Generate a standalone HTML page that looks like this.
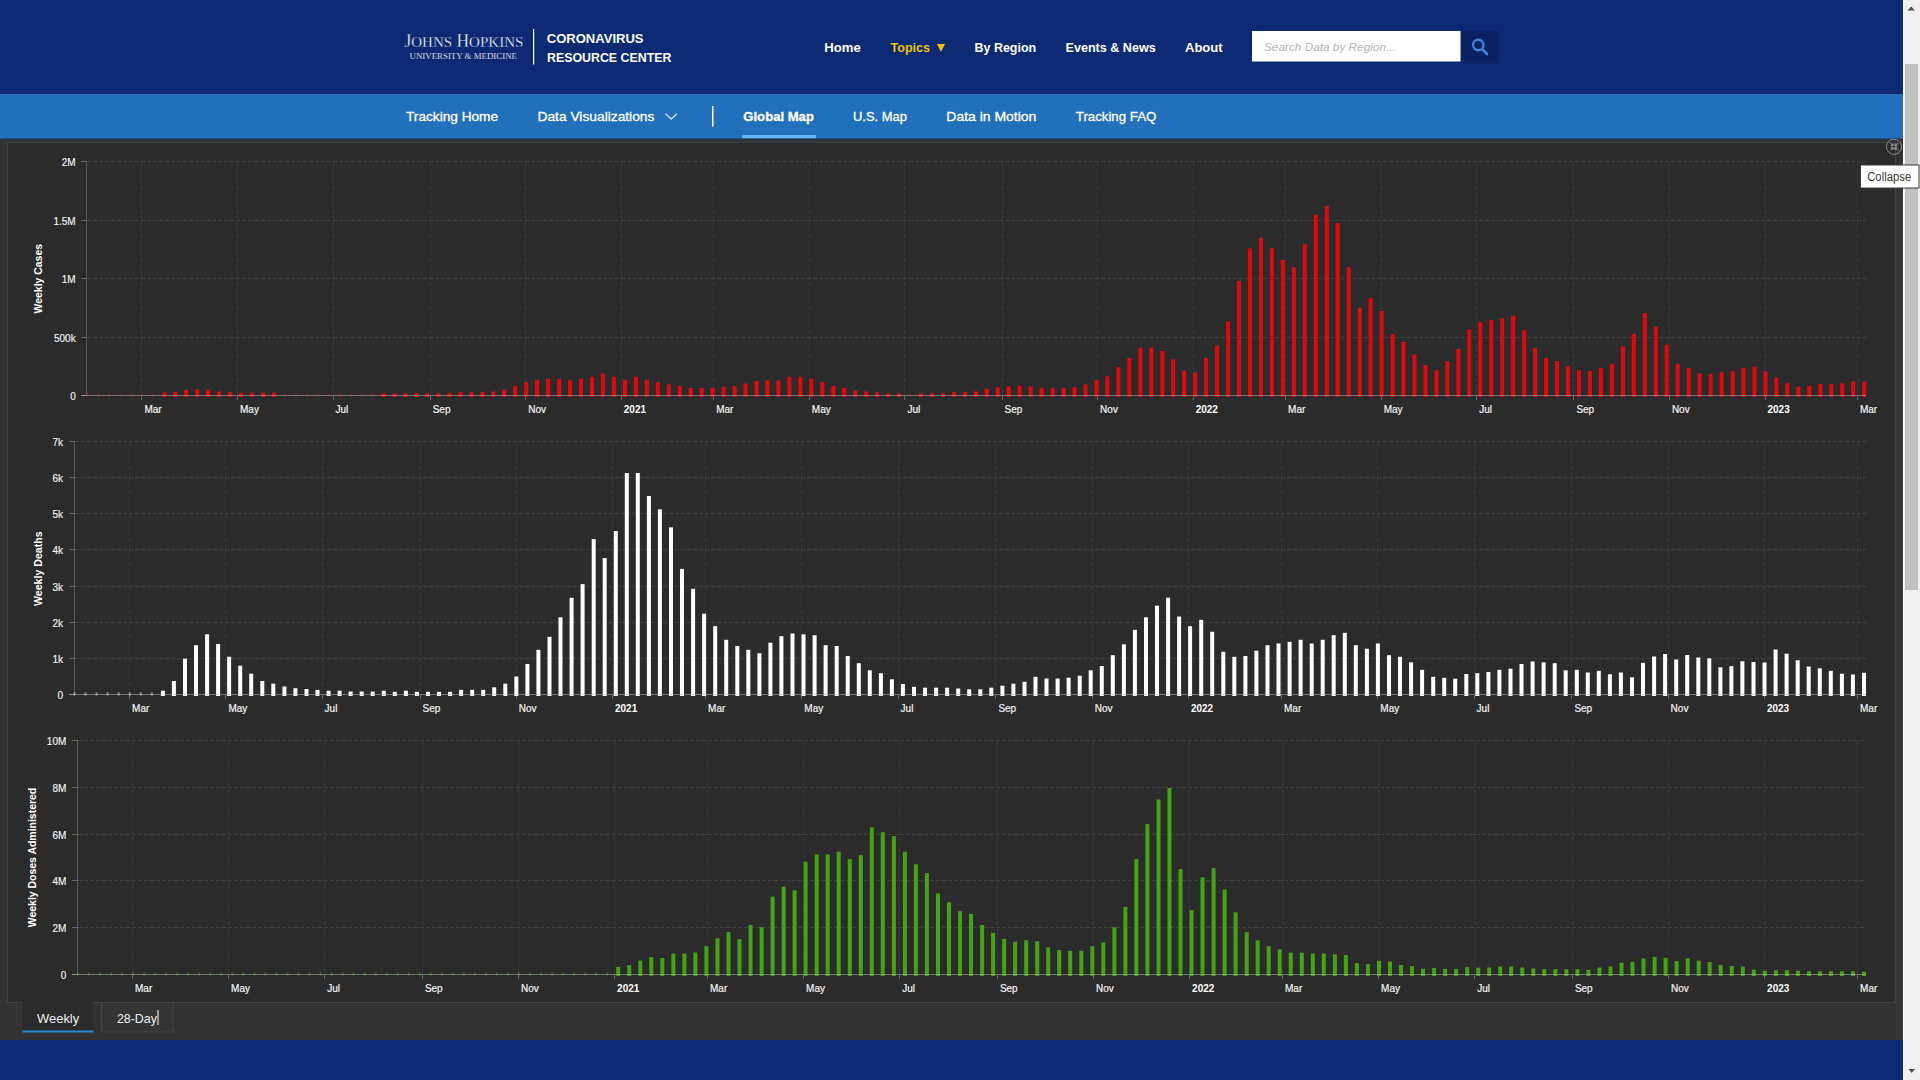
<!DOCTYPE html>
<html><head><meta charset="utf-8">
<style>
html,body{margin:0;padding:0;width:1920px;height:1080px;overflow:hidden;background:#333;font-family:"Liberation Sans",sans-serif;}
.abs{position:absolute;}
#hdr{left:0;top:0;width:1903px;height:94px;background:#0c2a74;}
#sub{left:0;top:94px;width:1903px;height:45px;background:#2270bb;border-top:1px solid #2d6db5;box-sizing:border-box;}
#content{left:0;top:139px;width:1903px;height:901px;background:#333;}
#panel{left:7px;top:142px;width:1889px;height:861px;background:#2b2b2b;border:1px solid #404040;box-sizing:border-box;}
#foot{left:0;top:1040px;width:1903px;height:40px;background:#0c2a74;}
#scroll{left:1903px;top:0;width:17px;height:1080px;background:#f0f0f0;border-left:1px solid #fff;box-sizing:border-box;}
#thumb{left:1905px;top:64px;width:13px;height:526px;background:#c1c1c1;}
svg text{font-family:"Liberation Sans",sans-serif;}
.g{stroke:#404040;stroke-width:1;stroke-dasharray:4 2;shape-rendering:crispEdges;}
.gv{stroke:#393939;stroke-width:1;stroke-dasharray:4 2;shape-rendering:crispEdges;}
.ax{stroke:#575757;stroke-width:1;shape-rendering:crispEdges;}
.tk{stroke:#666;stroke-width:1;shape-rendering:crispEdges;}
.yl{font-size:10px;fill:#f2f2f2;text-anchor:end;stroke:#f2f2f2;stroke-width:0.15px;}
.xl{font-size:10px;fill:#f2f2f2;stroke:#f2f2f2;stroke-width:0.2px;}
.xly{font-size:10px;fill:#fff;font-weight:bold;}
.tl{font-size:10px;fill:#fff;font-weight:bold;}
.nav{font-size:13px;fill:#fff;font-weight:bold;}
.snav{font-size:13.5px;fill:#fff;stroke:#fff;stroke-width:0.3px;}
</style></head><body>
<div id="hdr" class="abs"></div>
<div id="sub" class="abs"></div>
<div id="content" class="abs"></div>
<div id="panel" class="abs"></div>
<div id="foot" class="abs"></div>
<div id="scroll" class="abs"></div>
<div id="thumb" class="abs"></div>
<svg class="abs" style="left:0;top:0" width="1920" height="1080" viewBox="0 0 1920 1080">
<!-- header -->
<g fill="#fff">
<text x="404.4" y="46.6" style="font-family:'Liberation Serif';paint-order:fill" stroke="#0c2a74" stroke-width="0.35" font-size="18" textLength="119" lengthAdjust="spacingAndGlyphs">J<tspan font-size="15.5">OHNS</tspan> H<tspan font-size="15.5">OPKINS</tspan></text>
<text x="409.5" y="59" style="font-family:'Liberation Serif'" stroke="#0c2a74" stroke-width="0.15" font-size="7.6" textLength="107.5" lengthAdjust="spacingAndGlyphs">UNIVERSITY &amp; MEDICINE</text>
<rect x="533" y="29" width="1.2" height="35.5"/>
<text x="546.8" y="43.4" font-size="12.6" font-weight="bold" textLength="96.7" lengthAdjust="spacingAndGlyphs">CORONAVIRUS</text>
<text x="547" y="61.5" font-size="12.6" font-weight="bold" textLength="124.4" lengthAdjust="spacingAndGlyphs">RESOURCE CENTER</text>
</g>
<g class="nav">
<text x="824.2" y="51.9" class="nav" textLength="36.6" lengthAdjust="spacingAndGlyphs">Home</text>
<text x="890.5" y="51.9" class="nav" style="fill:#f3c300" textLength="39.5" lengthAdjust="spacingAndGlyphs">Topics</text>
<path d="M937 44 L945 44 L941 52 Z" fill="#f3c300"/>
<text x="974.5" y="51.9" class="nav" textLength="61.7" lengthAdjust="spacingAndGlyphs">By Region</text>
<text x="1065.5" y="51.9" class="nav" textLength="90.2" lengthAdjust="spacingAndGlyphs">Events &amp; News</text>
<text x="1185" y="51.9" class="nav" textLength="37.5" lengthAdjust="spacingAndGlyphs">About</text>
</g>
<rect x="1252" y="31" width="208.5" height="30.5" fill="#fff"/>
<rect x="1461.5" y="31" width="37" height="32.5" fill="#0a2262"/>
<text x="1264" y="50.8" font-size="11.5" font-style="italic" fill="#b5b5b5" textLength="131.8" lengthAdjust="spacingAndGlyphs">Search Data by Region...</text>
<g stroke="#3d85d6" stroke-width="2.4" fill="none"><circle cx="1478.3" cy="45" r="5.2"/><line x1="1482" y1="49" x2="1487" y2="54" stroke-width="2.6" stroke-linecap="round"/></g>
<!-- subnav -->
<g>
<text x="406" y="121.4" class="snav" textLength="92.1" lengthAdjust="spacingAndGlyphs">Tracking Home</text>
<text x="537.5" y="121.4" class="snav" textLength="116.9" lengthAdjust="spacingAndGlyphs">Data Visualizations</text>
<path d="M665.5 113.8 L671.2 119 L677 113.8" stroke="#cfe0f3" stroke-width="1.3" fill="none"/>
<rect x="712" y="106" width="1.5" height="20.6" fill="#fff"/>
<text x="743.3" y="121.4" class="snav" font-weight="bold" textLength="70.6" lengthAdjust="spacingAndGlyphs">Global Map</text>
<rect x="742.2" y="135" width="73.8" height="3.5" fill="#6cb2f0"/>
<text x="853" y="121.4" class="snav" textLength="54" lengthAdjust="spacingAndGlyphs">U.S. Map</text>
<text x="946.3" y="121.4" class="snav" textLength="90" lengthAdjust="spacingAndGlyphs">Data in Motion</text>
<text x="1075.8" y="121.4" class="snav" textLength="80.5" lengthAdjust="spacingAndGlyphs">Tracking FAQ</text>
</g>
<rect x="0" y="138.5" width="1903" height="1.5" fill="#1d3550"/>
<rect x="0" y="93" width="1903" height="1" fill="#03276d"/>
<!-- charts -->
<line x1="86.5" y1="337.0" x2="1866" y2="337.0" class="g"/>
<line x1="86.5" y1="278.5" x2="1866" y2="278.5" class="g"/>
<line x1="86.5" y1="220.0" x2="1866" y2="220.0" class="g"/>
<line x1="86.5" y1="161.5" x2="1866" y2="161.5" class="g"/>
<line x1="141.9" y1="161.5" x2="141.9" y2="395.5" class="gv"/>
<line x1="237.5" y1="161.5" x2="237.5" y2="395.5" class="gv"/>
<line x1="333.0" y1="161.5" x2="333.0" y2="395.5" class="gv"/>
<line x1="430.2" y1="161.5" x2="430.2" y2="395.5" class="gv"/>
<line x1="525.7" y1="161.5" x2="525.7" y2="395.5" class="gv"/>
<line x1="621.3" y1="161.5" x2="621.3" y2="395.5" class="gv"/>
<line x1="713.7" y1="161.5" x2="713.7" y2="395.5" class="gv"/>
<line x1="809.3" y1="161.5" x2="809.3" y2="395.5" class="gv"/>
<line x1="904.9" y1="161.5" x2="904.9" y2="395.5" class="gv"/>
<line x1="1002.0" y1="161.5" x2="1002.0" y2="395.5" class="gv"/>
<line x1="1097.6" y1="161.5" x2="1097.6" y2="395.5" class="gv"/>
<line x1="1193.2" y1="161.5" x2="1193.2" y2="395.5" class="gv"/>
<line x1="1285.6" y1="161.5" x2="1285.6" y2="395.5" class="gv"/>
<line x1="1381.2" y1="161.5" x2="1381.2" y2="395.5" class="gv"/>
<line x1="1476.7" y1="161.5" x2="1476.7" y2="395.5" class="gv"/>
<line x1="1573.9" y1="161.5" x2="1573.9" y2="395.5" class="gv"/>
<line x1="1669.4" y1="161.5" x2="1669.4" y2="395.5" class="gv"/>
<line x1="1765.0" y1="161.5" x2="1765.0" y2="395.5" class="gv"/>
<line x1="1857.4" y1="161.5" x2="1857.4" y2="395.5" class="gv"/>
<line x1="86.5" y1="161.5" x2="86.5" y2="395.5" class="ax"/>
<line x1="80.5" y1="395.5" x2="86.5" y2="395.5" class="tk"/>
<text x="75.7" y="400.0" class="yl">0</text>
<line x1="80.5" y1="337.0" x2="86.5" y2="337.0" class="tk"/>
<text x="75.7" y="341.5" class="yl">500k</text>
<line x1="80.5" y1="278.5" x2="86.5" y2="278.5" class="tk"/>
<text x="75.7" y="283.0" class="yl">1M</text>
<line x1="80.5" y1="220.0" x2="86.5" y2="220.0" class="tk"/>
<text x="75.7" y="224.5" class="yl">1.5M</text>
<line x1="80.5" y1="161.5" x2="86.5" y2="161.5" class="tk"/>
<text x="75.7" y="166.0" class="yl">2M</text>
<line x1="141.9" y1="395.5" x2="141.9" y2="400.0" class="tk"/>
<text x="144.4" y="412.7" class="xl">Mar</text>
<line x1="237.5" y1="395.5" x2="237.5" y2="400.0" class="tk"/>
<text x="240.0" y="412.7" class="xl">May</text>
<line x1="333.0" y1="395.5" x2="333.0" y2="400.0" class="tk"/>
<text x="335.5" y="412.7" class="xl">Jul</text>
<line x1="430.2" y1="395.5" x2="430.2" y2="400.0" class="tk"/>
<text x="432.7" y="412.7" class="xl">Sep</text>
<line x1="525.7" y1="395.5" x2="525.7" y2="400.0" class="tk"/>
<text x="528.2" y="412.7" class="xl">Nov</text>
<line x1="621.3" y1="395.5" x2="621.3" y2="400.0" class="tk"/>
<text x="623.8" y="412.7" class="xly">2021</text>
<line x1="713.7" y1="395.5" x2="713.7" y2="400.0" class="tk"/>
<text x="716.2" y="412.7" class="xl">Mar</text>
<line x1="809.3" y1="395.5" x2="809.3" y2="400.0" class="tk"/>
<text x="811.8" y="412.7" class="xl">May</text>
<line x1="904.9" y1="395.5" x2="904.9" y2="400.0" class="tk"/>
<text x="907.4" y="412.7" class="xl">Jul</text>
<line x1="1002.0" y1="395.5" x2="1002.0" y2="400.0" class="tk"/>
<text x="1004.5" y="412.7" class="xl">Sep</text>
<line x1="1097.6" y1="395.5" x2="1097.6" y2="400.0" class="tk"/>
<text x="1100.1" y="412.7" class="xl">Nov</text>
<line x1="1193.2" y1="395.5" x2="1193.2" y2="400.0" class="tk"/>
<text x="1195.7" y="412.7" class="xly">2022</text>
<line x1="1285.6" y1="395.5" x2="1285.6" y2="400.0" class="tk"/>
<text x="1288.1" y="412.7" class="xl">Mar</text>
<line x1="1381.2" y1="395.5" x2="1381.2" y2="400.0" class="tk"/>
<text x="1383.7" y="412.7" class="xl">May</text>
<line x1="1476.7" y1="395.5" x2="1476.7" y2="400.0" class="tk"/>
<text x="1479.2" y="412.7" class="xl">Jul</text>
<line x1="1573.9" y1="395.5" x2="1573.9" y2="400.0" class="tk"/>
<text x="1576.4" y="412.7" class="xl">Sep</text>
<line x1="1669.4" y1="395.5" x2="1669.4" y2="400.0" class="tk"/>
<text x="1671.9" y="412.7" class="xl">Nov</text>
<line x1="1765.0" y1="395.5" x2="1765.0" y2="400.0" class="tk"/>
<text x="1767.5" y="412.7" class="xly">2023</text>
<line x1="1857.4" y1="395.5" x2="1857.4" y2="400.0" class="tk"/>
<text x="1859.9" y="412.7" class="xl">Mar</text>
<rect x="86.5" y="393.5" width="2" height="3" fill="#dc0a0e" opacity="0.5"/>
<rect x="97.5" y="393.5" width="2" height="3" fill="#dc0a0e" opacity="0.5"/>
<rect x="108.4" y="393.5" width="2" height="3" fill="#dc0a0e" opacity="0.5"/>
<rect x="119.4" y="393.5" width="2" height="3" fill="#dc0a0e" opacity="0.5"/>
<rect x="130.4" y="393.5" width="2" height="3" fill="#dc0a0e" opacity="0.5"/>
<rect x="141.3" y="393.5" width="2" height="3" fill="#dc0a0e" opacity="0.5"/>
<rect x="152.3" y="393.5" width="2" height="3" fill="#dc0a0e" opacity="0.5"/>
<rect x="162.3" y="392.5" width="4" height="4.5" fill="#dc0a0e"/>
<rect x="173.2" y="391.8" width="4" height="5.2" fill="#dc0a0e"/>
<rect x="184.2" y="389.9" width="4" height="7.1" fill="#dc0a0e"/>
<rect x="195.2" y="389.3" width="4" height="7.7" fill="#dc0a0e"/>
<rect x="206.1" y="389.9" width="4" height="7.1" fill="#dc0a0e"/>
<rect x="217.1" y="391.5" width="4" height="5.5" fill="#dc0a0e"/>
<rect x="228.1" y="392.1" width="4" height="4.9" fill="#dc0a0e"/>
<rect x="239.0" y="393.0" width="4" height="4.0" fill="#dc0a0e"/>
<rect x="250.0" y="392.7" width="4" height="4.3" fill="#dc0a0e"/>
<rect x="261.0" y="392.7" width="4" height="4.3" fill="#dc0a0e"/>
<rect x="271.9" y="392.7" width="4" height="4.3" fill="#dc0a0e"/>
<rect x="283.9" y="393.5" width="2" height="3" fill="#dc0a0e" opacity="0.5"/>
<rect x="294.9" y="393.5" width="2" height="3" fill="#dc0a0e" opacity="0.5"/>
<rect x="305.8" y="393.5" width="2" height="3" fill="#dc0a0e" opacity="0.5"/>
<rect x="316.8" y="393.5" width="2" height="3" fill="#dc0a0e" opacity="0.5"/>
<rect x="327.8" y="393.5" width="2" height="3" fill="#dc0a0e" opacity="0.5"/>
<rect x="338.7" y="393.5" width="2" height="3" fill="#dc0a0e" opacity="0.5"/>
<rect x="349.7" y="393.5" width="2" height="3" fill="#dc0a0e" opacity="0.5"/>
<rect x="360.7" y="393.5" width="2" height="3" fill="#dc0a0e" opacity="0.5"/>
<rect x="371.6" y="393.5" width="2" height="3" fill="#dc0a0e" opacity="0.5"/>
<rect x="381.6" y="393.5" width="4" height="3.5" fill="#dc0a0e"/>
<rect x="392.6" y="393.5" width="4" height="3.5" fill="#dc0a0e"/>
<rect x="403.5" y="393.2" width="4" height="3.8" fill="#dc0a0e"/>
<rect x="414.5" y="393.2" width="4" height="3.8" fill="#dc0a0e"/>
<rect x="425.5" y="393.5" width="4" height="3.5" fill="#dc0a0e"/>
<rect x="436.4" y="393.2" width="4" height="3.8" fill="#dc0a0e"/>
<rect x="447.4" y="393.2" width="4" height="3.8" fill="#dc0a0e"/>
<rect x="458.4" y="392.2" width="4" height="4.8" fill="#dc0a0e"/>
<rect x="469.3" y="392.2" width="4" height="4.8" fill="#dc0a0e"/>
<rect x="480.3" y="392.2" width="4" height="4.8" fill="#dc0a0e"/>
<rect x="491.3" y="391.5" width="4" height="5.5" fill="#dc0a0e"/>
<rect x="502.2" y="389.8" width="4" height="7.2" fill="#dc0a0e"/>
<rect x="513.2" y="386.0" width="4" height="11.0" fill="#dc0a0e"/>
<rect x="524.2" y="382.2" width="4" height="14.8" fill="#dc0a0e"/>
<rect x="535.1" y="380.2" width="4" height="16.8" fill="#dc0a0e"/>
<rect x="546.1" y="378.8" width="4" height="18.2" fill="#dc0a0e"/>
<rect x="557.1" y="378.8" width="4" height="18.2" fill="#dc0a0e"/>
<rect x="568.0" y="380.2" width="4" height="16.8" fill="#dc0a0e"/>
<rect x="579.0" y="378.8" width="4" height="18.2" fill="#dc0a0e"/>
<rect x="590.0" y="376.8" width="4" height="20.2" fill="#dc0a0e"/>
<rect x="600.9" y="373.5" width="4" height="23.5" fill="#dc0a0e"/>
<rect x="611.9" y="376.8" width="4" height="20.2" fill="#dc0a0e"/>
<rect x="622.9" y="379.8" width="4" height="17.2" fill="#dc0a0e"/>
<rect x="633.9" y="376.8" width="4" height="20.2" fill="#dc0a0e"/>
<rect x="644.8" y="379.8" width="4" height="17.2" fill="#dc0a0e"/>
<rect x="655.8" y="382.2" width="4" height="14.8" fill="#dc0a0e"/>
<rect x="666.8" y="384.3" width="4" height="12.7" fill="#dc0a0e"/>
<rect x="677.7" y="386.0" width="4" height="11.0" fill="#dc0a0e"/>
<rect x="688.7" y="388.0" width="4" height="9.0" fill="#dc0a0e"/>
<rect x="699.7" y="388.0" width="4" height="9.0" fill="#dc0a0e"/>
<rect x="710.6" y="388.0" width="4" height="9.0" fill="#dc0a0e"/>
<rect x="721.6" y="386.8" width="4" height="10.2" fill="#dc0a0e"/>
<rect x="732.6" y="386.0" width="4" height="11.0" fill="#dc0a0e"/>
<rect x="743.5" y="383.5" width="4" height="13.5" fill="#dc0a0e"/>
<rect x="754.5" y="381.0" width="4" height="16.0" fill="#dc0a0e"/>
<rect x="765.5" y="380.5" width="4" height="16.5" fill="#dc0a0e"/>
<rect x="776.4" y="380.5" width="4" height="16.5" fill="#dc0a0e"/>
<rect x="787.4" y="376.8" width="4" height="20.2" fill="#dc0a0e"/>
<rect x="798.4" y="376.8" width="4" height="20.2" fill="#dc0a0e"/>
<rect x="809.3" y="378.8" width="4" height="18.2" fill="#dc0a0e"/>
<rect x="820.3" y="382.2" width="4" height="14.8" fill="#dc0a0e"/>
<rect x="831.3" y="386.0" width="4" height="11.0" fill="#dc0a0e"/>
<rect x="842.2" y="388.0" width="4" height="9.0" fill="#dc0a0e"/>
<rect x="853.2" y="390.5" width="4" height="6.5" fill="#dc0a0e"/>
<rect x="864.2" y="391.5" width="4" height="5.5" fill="#dc0a0e"/>
<rect x="875.1" y="392.2" width="4" height="4.8" fill="#dc0a0e"/>
<rect x="886.1" y="393.2" width="4" height="3.8" fill="#dc0a0e"/>
<rect x="897.1" y="393.2" width="4" height="3.8" fill="#dc0a0e"/>
<rect x="909.0" y="393.5" width="2" height="3" fill="#dc0a0e" opacity="0.5"/>
<rect x="919.0" y="393.5" width="4" height="3.5" fill="#dc0a0e"/>
<rect x="930.0" y="393.2" width="4" height="3.8" fill="#dc0a0e"/>
<rect x="940.9" y="393.2" width="4" height="3.8" fill="#dc0a0e"/>
<rect x="951.9" y="392.2" width="4" height="4.8" fill="#dc0a0e"/>
<rect x="962.9" y="392.2" width="4" height="4.8" fill="#dc0a0e"/>
<rect x="973.8" y="391.5" width="4" height="5.5" fill="#dc0a0e"/>
<rect x="984.8" y="388.8" width="4" height="8.2" fill="#dc0a0e"/>
<rect x="995.8" y="387.2" width="4" height="9.8" fill="#dc0a0e"/>
<rect x="1006.7" y="386.3" width="4" height="10.7" fill="#dc0a0e"/>
<rect x="1017.7" y="385.5" width="4" height="11.5" fill="#dc0a0e"/>
<rect x="1028.7" y="386.3" width="4" height="10.7" fill="#dc0a0e"/>
<rect x="1039.6" y="388.2" width="4" height="8.8" fill="#dc0a0e"/>
<rect x="1050.6" y="388.2" width="4" height="8.8" fill="#dc0a0e"/>
<rect x="1061.6" y="388.2" width="4" height="8.8" fill="#dc0a0e"/>
<rect x="1072.5" y="387.2" width="4" height="9.8" fill="#dc0a0e"/>
<rect x="1083.5" y="384.3" width="4" height="12.7" fill="#dc0a0e"/>
<rect x="1094.5" y="380.2" width="4" height="16.8" fill="#dc0a0e"/>
<rect x="1105.4" y="376.3" width="4" height="20.7" fill="#dc0a0e"/>
<rect x="1116.4" y="367.2" width="4" height="29.8" fill="#dc0a0e"/>
<rect x="1127.4" y="358.2" width="4" height="38.8" fill="#dc0a0e"/>
<rect x="1138.3" y="347.7" width="4" height="49.3" fill="#dc0a0e"/>
<rect x="1149.3" y="347.7" width="4" height="49.3" fill="#dc0a0e"/>
<rect x="1160.3" y="351.0" width="4" height="46.0" fill="#dc0a0e"/>
<rect x="1171.2" y="359.3" width="4" height="37.7" fill="#dc0a0e"/>
<rect x="1182.2" y="370.8" width="4" height="26.2" fill="#dc0a0e"/>
<rect x="1193.2" y="372.5" width="4" height="24.5" fill="#dc0a0e"/>
<rect x="1204.1" y="358.0" width="4" height="39.0" fill="#dc0a0e"/>
<rect x="1215.1" y="345.5" width="4" height="51.5" fill="#dc0a0e"/>
<rect x="1226.1" y="321.2" width="4" height="75.8" fill="#dc0a0e"/>
<rect x="1237.0" y="280.8" width="4" height="116.2" fill="#dc0a0e"/>
<rect x="1248.0" y="248.3" width="4" height="148.7" fill="#dc0a0e"/>
<rect x="1259.0" y="237.7" width="4" height="159.3" fill="#dc0a0e"/>
<rect x="1269.9" y="248.3" width="4" height="148.7" fill="#dc0a0e"/>
<rect x="1280.9" y="259.9" width="4" height="137.1" fill="#dc0a0e"/>
<rect x="1291.9" y="267.2" width="4" height="129.8" fill="#dc0a0e"/>
<rect x="1302.8" y="244.3" width="4" height="152.7" fill="#dc0a0e"/>
<rect x="1313.8" y="214.8" width="4" height="182.2" fill="#dc0a0e"/>
<rect x="1324.8" y="206.1" width="4" height="190.9" fill="#dc0a0e"/>
<rect x="1335.7" y="223.2" width="4" height="173.8" fill="#dc0a0e"/>
<rect x="1346.7" y="267.2" width="4" height="129.8" fill="#dc0a0e"/>
<rect x="1357.7" y="307.7" width="4" height="89.3" fill="#dc0a0e"/>
<rect x="1368.6" y="298.1" width="4" height="98.9" fill="#dc0a0e"/>
<rect x="1379.6" y="311.0" width="4" height="86.0" fill="#dc0a0e"/>
<rect x="1390.6" y="334.3" width="4" height="62.7" fill="#dc0a0e"/>
<rect x="1401.5" y="341.7" width="4" height="55.3" fill="#dc0a0e"/>
<rect x="1412.5" y="354.3" width="4" height="42.7" fill="#dc0a0e"/>
<rect x="1423.5" y="365.2" width="4" height="31.8" fill="#dc0a0e"/>
<rect x="1434.4" y="370.2" width="4" height="26.8" fill="#dc0a0e"/>
<rect x="1445.4" y="361.0" width="4" height="36.0" fill="#dc0a0e"/>
<rect x="1456.4" y="349.0" width="4" height="48.0" fill="#dc0a0e"/>
<rect x="1467.3" y="329.3" width="4" height="67.7" fill="#dc0a0e"/>
<rect x="1478.3" y="322.2" width="4" height="74.8" fill="#dc0a0e"/>
<rect x="1489.3" y="320.2" width="4" height="76.8" fill="#dc0a0e"/>
<rect x="1500.2" y="318.5" width="4" height="78.5" fill="#dc0a0e"/>
<rect x="1511.2" y="316.0" width="4" height="81.0" fill="#dc0a0e"/>
<rect x="1522.2" y="330.2" width="4" height="66.8" fill="#dc0a0e"/>
<rect x="1533.1" y="348.0" width="4" height="49.0" fill="#dc0a0e"/>
<rect x="1544.1" y="358.2" width="4" height="38.8" fill="#dc0a0e"/>
<rect x="1555.1" y="361.0" width="4" height="36.0" fill="#dc0a0e"/>
<rect x="1566.0" y="366.3" width="4" height="30.7" fill="#dc0a0e"/>
<rect x="1577.0" y="370.2" width="4" height="26.8" fill="#dc0a0e"/>
<rect x="1588.0" y="371.0" width="4" height="26.0" fill="#dc0a0e"/>
<rect x="1598.9" y="368.2" width="4" height="28.8" fill="#dc0a0e"/>
<rect x="1609.9" y="363.8" width="4" height="33.2" fill="#dc0a0e"/>
<rect x="1620.9" y="346.3" width="4" height="50.7" fill="#dc0a0e"/>
<rect x="1631.8" y="334.0" width="4" height="63.0" fill="#dc0a0e"/>
<rect x="1642.8" y="313.0" width="4" height="84.0" fill="#dc0a0e"/>
<rect x="1653.8" y="326.5" width="4" height="70.5" fill="#dc0a0e"/>
<rect x="1664.7" y="344.7" width="4" height="52.3" fill="#dc0a0e"/>
<rect x="1675.7" y="363.8" width="4" height="33.2" fill="#dc0a0e"/>
<rect x="1686.7" y="368.2" width="4" height="28.8" fill="#dc0a0e"/>
<rect x="1697.6" y="373.3" width="4" height="23.7" fill="#dc0a0e"/>
<rect x="1708.6" y="374.0" width="4" height="23.0" fill="#dc0a0e"/>
<rect x="1719.6" y="372.2" width="4" height="24.8" fill="#dc0a0e"/>
<rect x="1730.6" y="371.4" width="4" height="25.6" fill="#dc0a0e"/>
<rect x="1741.5" y="367.8" width="4" height="29.2" fill="#dc0a0e"/>
<rect x="1752.5" y="366.9" width="4" height="30.1" fill="#dc0a0e"/>
<rect x="1763.5" y="371.4" width="4" height="25.6" fill="#dc0a0e"/>
<rect x="1774.4" y="377.7" width="4" height="19.3" fill="#dc0a0e"/>
<rect x="1785.4" y="383.2" width="4" height="13.8" fill="#dc0a0e"/>
<rect x="1796.4" y="386.7" width="4" height="10.3" fill="#dc0a0e"/>
<rect x="1807.3" y="385.8" width="4" height="11.2" fill="#dc0a0e"/>
<rect x="1818.3" y="384.0" width="4" height="13.0" fill="#dc0a0e"/>
<rect x="1829.3" y="383.8" width="4" height="13.2" fill="#dc0a0e"/>
<rect x="1840.2" y="383.2" width="4" height="13.8" fill="#dc0a0e"/>
<rect x="1851.2" y="381.4" width="4" height="15.6" fill="#dc0a0e"/>
<rect x="1862.2" y="381.7" width="4" height="15.3" fill="#dc0a0e"/>
<line x1="80.5" y1="395.5" x2="1866" y2="395.5" stroke="#b0b0b0" stroke-opacity="0.55" stroke-width="1" shape-rendering="crispEdges"/>
<text transform="translate(38.3,278.7) rotate(-90)" x="0" y="0" class="tl" text-anchor="middle" dominant-baseline="central" textLength="69.5" lengthAdjust="spacingAndGlyphs">Weekly Cases</text>
<line x1="74.5" y1="658.36" x2="1866" y2="658.36" class="g"/>
<line x1="74.5" y1="622.22" x2="1866" y2="622.22" class="g"/>
<line x1="74.5" y1="586.08" x2="1866" y2="586.08" class="g"/>
<line x1="74.5" y1="549.94" x2="1866" y2="549.94" class="g"/>
<line x1="74.5" y1="513.8" x2="1866" y2="513.8" class="g"/>
<line x1="74.5" y1="477.65999999999997" x2="1866" y2="477.65999999999997" class="g"/>
<line x1="74.5" y1="441.52" x2="1866" y2="441.52" class="g"/>
<line x1="129.6" y1="441.5" x2="129.6" y2="694.5" class="gv"/>
<line x1="225.9" y1="441.5" x2="225.9" y2="694.5" class="gv"/>
<line x1="322.1" y1="441.5" x2="322.1" y2="694.5" class="gv"/>
<line x1="420.0" y1="441.5" x2="420.0" y2="694.5" class="gv"/>
<line x1="516.2" y1="441.5" x2="516.2" y2="694.5" class="gv"/>
<line x1="612.5" y1="441.5" x2="612.5" y2="694.5" class="gv"/>
<line x1="705.6" y1="441.5" x2="705.6" y2="694.5" class="gv"/>
<line x1="801.8" y1="441.5" x2="801.8" y2="694.5" class="gv"/>
<line x1="898.1" y1="441.5" x2="898.1" y2="694.5" class="gv"/>
<line x1="995.9" y1="441.5" x2="995.9" y2="694.5" class="gv"/>
<line x1="1092.2" y1="441.5" x2="1092.2" y2="694.5" class="gv"/>
<line x1="1188.4" y1="441.5" x2="1188.4" y2="694.5" class="gv"/>
<line x1="1281.5" y1="441.5" x2="1281.5" y2="694.5" class="gv"/>
<line x1="1377.8" y1="441.5" x2="1377.8" y2="694.5" class="gv"/>
<line x1="1474.1" y1="441.5" x2="1474.1" y2="694.5" class="gv"/>
<line x1="1571.9" y1="441.5" x2="1571.9" y2="694.5" class="gv"/>
<line x1="1668.1" y1="441.5" x2="1668.1" y2="694.5" class="gv"/>
<line x1="1764.4" y1="441.5" x2="1764.4" y2="694.5" class="gv"/>
<line x1="1857.5" y1="441.5" x2="1857.5" y2="694.5" class="gv"/>
<line x1="74.5" y1="441.5" x2="74.5" y2="694.5" class="ax"/>
<line x1="68.5" y1="694.5" x2="74.5" y2="694.5" class="tk"/>
<text x="63" y="699.0" class="yl">0</text>
<line x1="68.5" y1="658.36" x2="74.5" y2="658.36" class="tk"/>
<text x="63" y="662.9" class="yl">1k</text>
<line x1="68.5" y1="622.22" x2="74.5" y2="622.22" class="tk"/>
<text x="63" y="626.7" class="yl">2k</text>
<line x1="68.5" y1="586.08" x2="74.5" y2="586.08" class="tk"/>
<text x="63" y="590.6" class="yl">3k</text>
<line x1="68.5" y1="549.94" x2="74.5" y2="549.94" class="tk"/>
<text x="63" y="554.4" class="yl">4k</text>
<line x1="68.5" y1="513.8" x2="74.5" y2="513.8" class="tk"/>
<text x="63" y="518.3" class="yl">5k</text>
<line x1="68.5" y1="477.65999999999997" x2="74.5" y2="477.65999999999997" class="tk"/>
<text x="63" y="482.2" class="yl">6k</text>
<line x1="68.5" y1="441.52" x2="74.5" y2="441.52" class="tk"/>
<text x="63" y="446.0" class="yl">7k</text>
<line x1="129.6" y1="694.5" x2="129.6" y2="699.0" class="tk"/>
<text x="132.1" y="711.7" class="xl">Mar</text>
<line x1="225.9" y1="694.5" x2="225.9" y2="699.0" class="tk"/>
<text x="228.4" y="711.7" class="xl">May</text>
<line x1="322.1" y1="694.5" x2="322.1" y2="699.0" class="tk"/>
<text x="324.6" y="711.7" class="xl">Jul</text>
<line x1="420.0" y1="694.5" x2="420.0" y2="699.0" class="tk"/>
<text x="422.5" y="711.7" class="xl">Sep</text>
<line x1="516.2" y1="694.5" x2="516.2" y2="699.0" class="tk"/>
<text x="518.7" y="711.7" class="xl">Nov</text>
<line x1="612.5" y1="694.5" x2="612.5" y2="699.0" class="tk"/>
<text x="615.0" y="711.7" class="xly">2021</text>
<line x1="705.6" y1="694.5" x2="705.6" y2="699.0" class="tk"/>
<text x="708.1" y="711.7" class="xl">Mar</text>
<line x1="801.8" y1="694.5" x2="801.8" y2="699.0" class="tk"/>
<text x="804.3" y="711.7" class="xl">May</text>
<line x1="898.1" y1="694.5" x2="898.1" y2="699.0" class="tk"/>
<text x="900.6" y="711.7" class="xl">Jul</text>
<line x1="995.9" y1="694.5" x2="995.9" y2="699.0" class="tk"/>
<text x="998.4" y="711.7" class="xl">Sep</text>
<line x1="1092.2" y1="694.5" x2="1092.2" y2="699.0" class="tk"/>
<text x="1094.7" y="711.7" class="xl">Nov</text>
<line x1="1188.4" y1="694.5" x2="1188.4" y2="699.0" class="tk"/>
<text x="1190.9" y="711.7" class="xly">2022</text>
<line x1="1281.5" y1="694.5" x2="1281.5" y2="699.0" class="tk"/>
<text x="1284.0" y="711.7" class="xl">Mar</text>
<line x1="1377.8" y1="694.5" x2="1377.8" y2="699.0" class="tk"/>
<text x="1380.3" y="711.7" class="xl">May</text>
<line x1="1474.1" y1="694.5" x2="1474.1" y2="699.0" class="tk"/>
<text x="1476.6" y="711.7" class="xl">Jul</text>
<line x1="1571.9" y1="694.5" x2="1571.9" y2="699.0" class="tk"/>
<text x="1574.4" y="711.7" class="xl">Sep</text>
<line x1="1668.1" y1="694.5" x2="1668.1" y2="699.0" class="tk"/>
<text x="1670.6" y="711.7" class="xl">Nov</text>
<line x1="1764.4" y1="694.5" x2="1764.4" y2="699.0" class="tk"/>
<text x="1766.9" y="711.7" class="xly">2023</text>
<line x1="1857.5" y1="694.5" x2="1857.5" y2="699.0" class="tk"/>
<text x="1860.0" y="711.7" class="xl">Mar</text>
<rect x="73.5" y="692.5" width="2" height="3" fill="#ffffff" opacity="0.5"/>
<rect x="84.5" y="692.5" width="2" height="3" fill="#ffffff" opacity="0.5"/>
<rect x="95.6" y="692.5" width="2" height="3" fill="#ffffff" opacity="0.5"/>
<rect x="106.6" y="692.5" width="2" height="3" fill="#ffffff" opacity="0.5"/>
<rect x="117.7" y="692.5" width="2" height="3" fill="#ffffff" opacity="0.5"/>
<rect x="128.7" y="692.5" width="2" height="3" fill="#ffffff" opacity="0.5"/>
<rect x="139.8" y="692.5" width="2" height="3" fill="#ffffff" opacity="0.5"/>
<rect x="150.8" y="692.5" width="2" height="3" fill="#ffffff" opacity="0.5"/>
<rect x="160.9" y="690.7" width="4" height="5.3" fill="#ffffff"/>
<rect x="171.9" y="681.0" width="4" height="15.0" fill="#ffffff"/>
<rect x="183.0" y="658.7" width="4" height="37.3" fill="#ffffff"/>
<rect x="194.0" y="645.2" width="4" height="50.8" fill="#ffffff"/>
<rect x="205.1" y="634.3" width="4" height="61.7" fill="#ffffff"/>
<rect x="216.1" y="644.0" width="4" height="52.0" fill="#ffffff"/>
<rect x="227.1" y="656.8" width="4" height="39.2" fill="#ffffff"/>
<rect x="238.2" y="665.7" width="4" height="30.3" fill="#ffffff"/>
<rect x="249.2" y="673.7" width="4" height="22.3" fill="#ffffff"/>
<rect x="260.3" y="681.0" width="4" height="15.0" fill="#ffffff"/>
<rect x="271.3" y="683.7" width="4" height="12.3" fill="#ffffff"/>
<rect x="282.4" y="686.5" width="4" height="9.5" fill="#ffffff"/>
<rect x="293.4" y="688.2" width="4" height="7.8" fill="#ffffff"/>
<rect x="304.5" y="689.0" width="4" height="7.0" fill="#ffffff"/>
<rect x="315.5" y="689.8" width="4" height="6.2" fill="#ffffff"/>
<rect x="326.6" y="690.7" width="4" height="5.3" fill="#ffffff"/>
<rect x="337.6" y="690.7" width="4" height="5.3" fill="#ffffff"/>
<rect x="348.6" y="691.5" width="4" height="4.5" fill="#ffffff"/>
<rect x="359.7" y="691.5" width="4" height="4.5" fill="#ffffff"/>
<rect x="370.7" y="691.5" width="4" height="4.5" fill="#ffffff"/>
<rect x="381.8" y="690.7" width="4" height="5.3" fill="#ffffff"/>
<rect x="392.8" y="691.8" width="4" height="4.2" fill="#ffffff"/>
<rect x="403.9" y="690.7" width="4" height="5.3" fill="#ffffff"/>
<rect x="414.9" y="691.8" width="4" height="4.2" fill="#ffffff"/>
<rect x="426.0" y="691.8" width="4" height="4.2" fill="#ffffff"/>
<rect x="437.0" y="691.8" width="4" height="4.2" fill="#ffffff"/>
<rect x="448.1" y="691.8" width="4" height="4.2" fill="#ffffff"/>
<rect x="459.1" y="689.8" width="4" height="6.2" fill="#ffffff"/>
<rect x="470.2" y="689.8" width="4" height="6.2" fill="#ffffff"/>
<rect x="481.2" y="689.8" width="4" height="6.2" fill="#ffffff"/>
<rect x="492.2" y="687.3" width="4" height="8.7" fill="#ffffff"/>
<rect x="503.3" y="683.7" width="4" height="12.3" fill="#ffffff"/>
<rect x="514.3" y="676.5" width="4" height="19.5" fill="#ffffff"/>
<rect x="525.4" y="664.0" width="4" height="32.0" fill="#ffffff"/>
<rect x="536.4" y="649.8" width="4" height="46.2" fill="#ffffff"/>
<rect x="547.5" y="636.8" width="4" height="59.2" fill="#ffffff"/>
<rect x="558.5" y="617.3" width="4" height="78.7" fill="#ffffff"/>
<rect x="569.6" y="597.8" width="4" height="98.2" fill="#ffffff"/>
<rect x="580.6" y="584.1" width="4" height="111.9" fill="#ffffff"/>
<rect x="591.7" y="539.1" width="4" height="156.9" fill="#ffffff"/>
<rect x="602.7" y="558.1" width="4" height="137.9" fill="#ffffff"/>
<rect x="613.8" y="531.0" width="4" height="165.0" fill="#ffffff"/>
<rect x="624.8" y="473.0" width="4" height="223.0" fill="#ffffff"/>
<rect x="635.8" y="473.0" width="4" height="223.0" fill="#ffffff"/>
<rect x="646.9" y="496.0" width="4" height="200.0" fill="#ffffff"/>
<rect x="657.9" y="509.3" width="4" height="186.7" fill="#ffffff"/>
<rect x="669.0" y="527.4" width="4" height="168.6" fill="#ffffff"/>
<rect x="680.0" y="568.9" width="4" height="127.1" fill="#ffffff"/>
<rect x="691.1" y="588.8" width="4" height="107.2" fill="#ffffff"/>
<rect x="702.1" y="613.7" width="4" height="82.3" fill="#ffffff"/>
<rect x="713.2" y="626.2" width="4" height="69.8" fill="#ffffff"/>
<rect x="724.2" y="639.8" width="4" height="56.2" fill="#ffffff"/>
<rect x="735.3" y="646.0" width="4" height="50.0" fill="#ffffff"/>
<rect x="746.3" y="649.8" width="4" height="46.2" fill="#ffffff"/>
<rect x="757.4" y="653.2" width="4" height="42.8" fill="#ffffff"/>
<rect x="768.4" y="642.7" width="4" height="53.3" fill="#ffffff"/>
<rect x="779.4" y="636.2" width="4" height="59.8" fill="#ffffff"/>
<rect x="790.5" y="633.5" width="4" height="62.5" fill="#ffffff"/>
<rect x="801.5" y="634.3" width="4" height="61.7" fill="#ffffff"/>
<rect x="812.6" y="635.2" width="4" height="60.8" fill="#ffffff"/>
<rect x="823.6" y="645.2" width="4" height="50.8" fill="#ffffff"/>
<rect x="834.7" y="646.0" width="4" height="50.0" fill="#ffffff"/>
<rect x="845.7" y="656.0" width="4" height="40.0" fill="#ffffff"/>
<rect x="856.8" y="663.2" width="4" height="32.8" fill="#ffffff"/>
<rect x="867.8" y="670.3" width="4" height="25.7" fill="#ffffff"/>
<rect x="878.9" y="673.2" width="4" height="22.8" fill="#ffffff"/>
<rect x="889.9" y="679.3" width="4" height="16.7" fill="#ffffff"/>
<rect x="900.9" y="684.0" width="4" height="12.0" fill="#ffffff"/>
<rect x="912.0" y="686.8" width="4" height="9.2" fill="#ffffff"/>
<rect x="923.0" y="687.7" width="4" height="8.3" fill="#ffffff"/>
<rect x="934.1" y="687.7" width="4" height="8.3" fill="#ffffff"/>
<rect x="945.1" y="687.7" width="4" height="8.3" fill="#ffffff"/>
<rect x="956.2" y="688.5" width="4" height="7.5" fill="#ffffff"/>
<rect x="967.2" y="689.3" width="4" height="6.7" fill="#ffffff"/>
<rect x="978.3" y="689.3" width="4" height="6.7" fill="#ffffff"/>
<rect x="989.3" y="687.7" width="4" height="8.3" fill="#ffffff"/>
<rect x="1000.4" y="685.7" width="4" height="10.3" fill="#ffffff"/>
<rect x="1011.4" y="683.7" width="4" height="12.3" fill="#ffffff"/>
<rect x="1022.5" y="681.8" width="4" height="14.2" fill="#ffffff"/>
<rect x="1033.5" y="676.8" width="4" height="19.2" fill="#ffffff"/>
<rect x="1044.5" y="678.5" width="4" height="17.5" fill="#ffffff"/>
<rect x="1055.6" y="678.5" width="4" height="17.5" fill="#ffffff"/>
<rect x="1066.6" y="677.7" width="4" height="18.3" fill="#ffffff"/>
<rect x="1077.7" y="675.7" width="4" height="20.3" fill="#ffffff"/>
<rect x="1088.7" y="670.3" width="4" height="25.7" fill="#ffffff"/>
<rect x="1099.8" y="666.0" width="4" height="30.0" fill="#ffffff"/>
<rect x="1110.8" y="655.2" width="4" height="40.8" fill="#ffffff"/>
<rect x="1121.9" y="644.3" width="4" height="51.7" fill="#ffffff"/>
<rect x="1132.9" y="629.8" width="4" height="66.2" fill="#ffffff"/>
<rect x="1144.0" y="617.3" width="4" height="78.7" fill="#ffffff"/>
<rect x="1155.0" y="605.7" width="4" height="90.3" fill="#ffffff"/>
<rect x="1166.1" y="597.7" width="4" height="98.3" fill="#ffffff"/>
<rect x="1177.1" y="616.5" width="4" height="79.5" fill="#ffffff"/>
<rect x="1188.1" y="626.2" width="4" height="69.8" fill="#ffffff"/>
<rect x="1199.2" y="619.8" width="4" height="76.2" fill="#ffffff"/>
<rect x="1210.2" y="631.8" width="4" height="64.2" fill="#ffffff"/>
<rect x="1221.3" y="651.8" width="4" height="44.2" fill="#ffffff"/>
<rect x="1232.3" y="656.8" width="4" height="39.2" fill="#ffffff"/>
<rect x="1243.4" y="656.0" width="4" height="40.0" fill="#ffffff"/>
<rect x="1254.4" y="650.7" width="4" height="45.3" fill="#ffffff"/>
<rect x="1265.5" y="645.2" width="4" height="50.8" fill="#ffffff"/>
<rect x="1276.5" y="643.5" width="4" height="52.5" fill="#ffffff"/>
<rect x="1287.6" y="641.8" width="4" height="54.2" fill="#ffffff"/>
<rect x="1298.6" y="639.8" width="4" height="56.2" fill="#ffffff"/>
<rect x="1309.7" y="643.5" width="4" height="52.5" fill="#ffffff"/>
<rect x="1320.7" y="639.8" width="4" height="56.2" fill="#ffffff"/>
<rect x="1331.7" y="635.2" width="4" height="60.8" fill="#ffffff"/>
<rect x="1342.8" y="632.8" width="4" height="63.2" fill="#ffffff"/>
<rect x="1353.8" y="645.2" width="4" height="50.8" fill="#ffffff"/>
<rect x="1364.9" y="648.7" width="4" height="47.3" fill="#ffffff"/>
<rect x="1375.9" y="643.5" width="4" height="52.5" fill="#ffffff"/>
<rect x="1387.0" y="655.2" width="4" height="40.8" fill="#ffffff"/>
<rect x="1398.0" y="656.8" width="4" height="39.2" fill="#ffffff"/>
<rect x="1409.1" y="662.3" width="4" height="33.7" fill="#ffffff"/>
<rect x="1420.1" y="669.8" width="4" height="26.2" fill="#ffffff"/>
<rect x="1431.2" y="676.8" width="4" height="19.2" fill="#ffffff"/>
<rect x="1442.2" y="677.8" width="4" height="18.2" fill="#ffffff"/>
<rect x="1453.2" y="678.7" width="4" height="17.3" fill="#ffffff"/>
<rect x="1464.3" y="674.0" width="4" height="22.0" fill="#ffffff"/>
<rect x="1475.3" y="673.2" width="4" height="22.8" fill="#ffffff"/>
<rect x="1486.4" y="672.0" width="4" height="24.0" fill="#ffffff"/>
<rect x="1497.4" y="669.8" width="4" height="26.2" fill="#ffffff"/>
<rect x="1508.5" y="668.7" width="4" height="27.3" fill="#ffffff"/>
<rect x="1519.5" y="664.0" width="4" height="32.0" fill="#ffffff"/>
<rect x="1530.6" y="661.5" width="4" height="34.5" fill="#ffffff"/>
<rect x="1541.6" y="662.3" width="4" height="33.7" fill="#ffffff"/>
<rect x="1552.7" y="663.2" width="4" height="32.8" fill="#ffffff"/>
<rect x="1563.7" y="670.3" width="4" height="25.7" fill="#ffffff"/>
<rect x="1574.8" y="669.8" width="4" height="26.2" fill="#ffffff"/>
<rect x="1585.8" y="672.5" width="4" height="23.5" fill="#ffffff"/>
<rect x="1596.8" y="670.8" width="4" height="25.2" fill="#ffffff"/>
<rect x="1607.9" y="674.3" width="4" height="21.7" fill="#ffffff"/>
<rect x="1618.9" y="672.5" width="4" height="23.5" fill="#ffffff"/>
<rect x="1630.0" y="677.3" width="4" height="18.7" fill="#ffffff"/>
<rect x="1641.0" y="662.8" width="4" height="33.2" fill="#ffffff"/>
<rect x="1652.1" y="656.5" width="4" height="39.5" fill="#ffffff"/>
<rect x="1663.1" y="654.0" width="4" height="42.0" fill="#ffffff"/>
<rect x="1674.2" y="659.5" width="4" height="36.5" fill="#ffffff"/>
<rect x="1685.2" y="655.0" width="4" height="41.0" fill="#ffffff"/>
<rect x="1696.3" y="657.5" width="4" height="38.5" fill="#ffffff"/>
<rect x="1707.3" y="658.3" width="4" height="37.7" fill="#ffffff"/>
<rect x="1718.4" y="667.3" width="4" height="28.7" fill="#ffffff"/>
<rect x="1729.4" y="666.2" width="4" height="29.8" fill="#ffffff"/>
<rect x="1740.4" y="661.2" width="4" height="34.8" fill="#ffffff"/>
<rect x="1751.5" y="662.0" width="4" height="34.0" fill="#ffffff"/>
<rect x="1762.5" y="662.5" width="4" height="33.5" fill="#ffffff"/>
<rect x="1773.6" y="649.5" width="4" height="46.5" fill="#ffffff"/>
<rect x="1784.6" y="653.7" width="4" height="42.3" fill="#ffffff"/>
<rect x="1795.7" y="660.3" width="4" height="35.7" fill="#ffffff"/>
<rect x="1806.7" y="666.5" width="4" height="29.5" fill="#ffffff"/>
<rect x="1817.8" y="668.3" width="4" height="27.7" fill="#ffffff"/>
<rect x="1828.8" y="670.8" width="4" height="25.2" fill="#ffffff"/>
<rect x="1839.9" y="673.7" width="4" height="22.3" fill="#ffffff"/>
<rect x="1850.9" y="674.5" width="4" height="21.5" fill="#ffffff"/>
<rect x="1862.0" y="672.8" width="4" height="23.2" fill="#ffffff"/>
<line x1="68.5" y1="694.5" x2="1866" y2="694.5" stroke="#b0b0b0" stroke-opacity="0.55" stroke-width="1" shape-rendering="crispEdges"/>
<text transform="translate(38,568.7) rotate(-90)" x="0" y="0" class="tl" text-anchor="middle" dominant-baseline="central" textLength="74.5" lengthAdjust="spacingAndGlyphs">Weekly Deaths</text>
<line x1="77.5" y1="927.7" x2="1866" y2="927.7" class="g"/>
<line x1="77.5" y1="880.9" x2="1866" y2="880.9" class="g"/>
<line x1="77.5" y1="834.1" x2="1866" y2="834.1" class="g"/>
<line x1="77.5" y1="787.3" x2="1866" y2="787.3" class="g"/>
<line x1="77.5" y1="740.5" x2="1866" y2="740.5" class="g"/>
<line x1="132.5" y1="740.5" x2="132.5" y2="974.5" class="gv"/>
<line x1="228.6" y1="740.5" x2="228.6" y2="974.5" class="gv"/>
<line x1="324.7" y1="740.5" x2="324.7" y2="974.5" class="gv"/>
<line x1="422.4" y1="740.5" x2="422.4" y2="974.5" class="gv"/>
<line x1="518.5" y1="740.5" x2="518.5" y2="974.5" class="gv"/>
<line x1="614.6" y1="740.5" x2="614.6" y2="974.5" class="gv"/>
<line x1="707.5" y1="740.5" x2="707.5" y2="974.5" class="gv"/>
<line x1="803.6" y1="740.5" x2="803.6" y2="974.5" class="gv"/>
<line x1="899.7" y1="740.5" x2="899.7" y2="974.5" class="gv"/>
<line x1="997.4" y1="740.5" x2="997.4" y2="974.5" class="gv"/>
<line x1="1093.5" y1="740.5" x2="1093.5" y2="974.5" class="gv"/>
<line x1="1189.6" y1="740.5" x2="1189.6" y2="974.5" class="gv"/>
<line x1="1282.5" y1="740.5" x2="1282.5" y2="974.5" class="gv"/>
<line x1="1378.6" y1="740.5" x2="1378.6" y2="974.5" class="gv"/>
<line x1="1474.7" y1="740.5" x2="1474.7" y2="974.5" class="gv"/>
<line x1="1572.4" y1="740.5" x2="1572.4" y2="974.5" class="gv"/>
<line x1="1668.5" y1="740.5" x2="1668.5" y2="974.5" class="gv"/>
<line x1="1764.6" y1="740.5" x2="1764.6" y2="974.5" class="gv"/>
<line x1="1857.6" y1="740.5" x2="1857.6" y2="974.5" class="gv"/>
<line x1="77.5" y1="740.5" x2="77.5" y2="974.5" class="ax"/>
<line x1="71.5" y1="974.5" x2="77.5" y2="974.5" class="tk"/>
<text x="66.3" y="979.0" class="yl">0</text>
<line x1="71.5" y1="927.7" x2="77.5" y2="927.7" class="tk"/>
<text x="66.3" y="932.2" class="yl">2M</text>
<line x1="71.5" y1="880.9" x2="77.5" y2="880.9" class="tk"/>
<text x="66.3" y="885.4" class="yl">4M</text>
<line x1="71.5" y1="834.1" x2="77.5" y2="834.1" class="tk"/>
<text x="66.3" y="838.6" class="yl">6M</text>
<line x1="71.5" y1="787.3" x2="77.5" y2="787.3" class="tk"/>
<text x="66.3" y="791.8" class="yl">8M</text>
<line x1="71.5" y1="740.5" x2="77.5" y2="740.5" class="tk"/>
<text x="66.3" y="745.0" class="yl">10M</text>
<line x1="132.5" y1="974.5" x2="132.5" y2="979.0" class="tk"/>
<text x="135.0" y="991.7" class="xl">Mar</text>
<line x1="228.6" y1="974.5" x2="228.6" y2="979.0" class="tk"/>
<text x="231.1" y="991.7" class="xl">May</text>
<line x1="324.7" y1="974.5" x2="324.7" y2="979.0" class="tk"/>
<text x="327.2" y="991.7" class="xl">Jul</text>
<line x1="422.4" y1="974.5" x2="422.4" y2="979.0" class="tk"/>
<text x="424.9" y="991.7" class="xl">Sep</text>
<line x1="518.5" y1="974.5" x2="518.5" y2="979.0" class="tk"/>
<text x="521.0" y="991.7" class="xl">Nov</text>
<line x1="614.6" y1="974.5" x2="614.6" y2="979.0" class="tk"/>
<text x="617.1" y="991.7" class="xly">2021</text>
<line x1="707.5" y1="974.5" x2="707.5" y2="979.0" class="tk"/>
<text x="710.0" y="991.7" class="xl">Mar</text>
<line x1="803.6" y1="974.5" x2="803.6" y2="979.0" class="tk"/>
<text x="806.1" y="991.7" class="xl">May</text>
<line x1="899.7" y1="974.5" x2="899.7" y2="979.0" class="tk"/>
<text x="902.2" y="991.7" class="xl">Jul</text>
<line x1="997.4" y1="974.5" x2="997.4" y2="979.0" class="tk"/>
<text x="999.9" y="991.7" class="xl">Sep</text>
<line x1="1093.5" y1="974.5" x2="1093.5" y2="979.0" class="tk"/>
<text x="1096.0" y="991.7" class="xl">Nov</text>
<line x1="1189.6" y1="974.5" x2="1189.6" y2="979.0" class="tk"/>
<text x="1192.1" y="991.7" class="xly">2022</text>
<line x1="1282.5" y1="974.5" x2="1282.5" y2="979.0" class="tk"/>
<text x="1285.0" y="991.7" class="xl">Mar</text>
<line x1="1378.6" y1="974.5" x2="1378.6" y2="979.0" class="tk"/>
<text x="1381.1" y="991.7" class="xl">May</text>
<line x1="1474.7" y1="974.5" x2="1474.7" y2="979.0" class="tk"/>
<text x="1477.2" y="991.7" class="xl">Jul</text>
<line x1="1572.4" y1="974.5" x2="1572.4" y2="979.0" class="tk"/>
<text x="1574.9" y="991.7" class="xl">Sep</text>
<line x1="1668.5" y1="974.5" x2="1668.5" y2="979.0" class="tk"/>
<text x="1671.0" y="991.7" class="xl">Nov</text>
<line x1="1764.6" y1="974.5" x2="1764.6" y2="979.0" class="tk"/>
<text x="1767.1" y="991.7" class="xly">2023</text>
<line x1="1857.6" y1="974.5" x2="1857.6" y2="979.0" class="tk"/>
<text x="1860.1" y="991.7" class="xl">Mar</text>
<rect x="77.0" y="972.5" width="2" height="3" fill="#45a214" opacity="0.5"/>
<rect x="88.0" y="972.5" width="2" height="3" fill="#45a214" opacity="0.5"/>
<rect x="99.0" y="972.5" width="2" height="3" fill="#45a214" opacity="0.5"/>
<rect x="110.1" y="972.5" width="2" height="3" fill="#45a214" opacity="0.5"/>
<rect x="121.1" y="972.5" width="2" height="3" fill="#45a214" opacity="0.5"/>
<rect x="132.1" y="972.5" width="2" height="3" fill="#45a214" opacity="0.5"/>
<rect x="143.2" y="972.5" width="2" height="3" fill="#45a214" opacity="0.5"/>
<rect x="154.2" y="972.5" width="2" height="3" fill="#45a214" opacity="0.5"/>
<rect x="165.2" y="972.5" width="2" height="3" fill="#45a214" opacity="0.5"/>
<rect x="176.2" y="972.5" width="2" height="3" fill="#45a214" opacity="0.5"/>
<rect x="187.2" y="972.5" width="2" height="3" fill="#45a214" opacity="0.5"/>
<rect x="198.3" y="972.5" width="2" height="3" fill="#45a214" opacity="0.5"/>
<rect x="209.3" y="972.5" width="2" height="3" fill="#45a214" opacity="0.5"/>
<rect x="220.3" y="972.5" width="2" height="3" fill="#45a214" opacity="0.5"/>
<rect x="231.3" y="972.5" width="2" height="3" fill="#45a214" opacity="0.5"/>
<rect x="242.4" y="972.5" width="2" height="3" fill="#45a214" opacity="0.5"/>
<rect x="253.4" y="972.5" width="2" height="3" fill="#45a214" opacity="0.5"/>
<rect x="264.4" y="972.5" width="2" height="3" fill="#45a214" opacity="0.5"/>
<rect x="275.5" y="972.5" width="2" height="3" fill="#45a214" opacity="0.5"/>
<rect x="286.5" y="972.5" width="2" height="3" fill="#45a214" opacity="0.5"/>
<rect x="297.5" y="972.5" width="2" height="3" fill="#45a214" opacity="0.5"/>
<rect x="308.5" y="972.5" width="2" height="3" fill="#45a214" opacity="0.5"/>
<rect x="319.6" y="972.5" width="2" height="3" fill="#45a214" opacity="0.5"/>
<rect x="330.6" y="972.5" width="2" height="3" fill="#45a214" opacity="0.5"/>
<rect x="341.6" y="972.5" width="2" height="3" fill="#45a214" opacity="0.5"/>
<rect x="352.6" y="972.5" width="2" height="3" fill="#45a214" opacity="0.5"/>
<rect x="363.7" y="972.5" width="2" height="3" fill="#45a214" opacity="0.5"/>
<rect x="374.7" y="972.5" width="2" height="3" fill="#45a214" opacity="0.5"/>
<rect x="385.7" y="972.5" width="2" height="3" fill="#45a214" opacity="0.5"/>
<rect x="396.7" y="972.5" width="2" height="3" fill="#45a214" opacity="0.5"/>
<rect x="407.8" y="972.5" width="2" height="3" fill="#45a214" opacity="0.5"/>
<rect x="418.8" y="972.5" width="2" height="3" fill="#45a214" opacity="0.5"/>
<rect x="429.8" y="972.5" width="2" height="3" fill="#45a214" opacity="0.5"/>
<rect x="440.8" y="972.5" width="2" height="3" fill="#45a214" opacity="0.5"/>
<rect x="451.9" y="972.5" width="2" height="3" fill="#45a214" opacity="0.5"/>
<rect x="462.9" y="972.5" width="2" height="3" fill="#45a214" opacity="0.5"/>
<rect x="473.9" y="972.5" width="2" height="3" fill="#45a214" opacity="0.5"/>
<rect x="484.9" y="972.5" width="2" height="3" fill="#45a214" opacity="0.5"/>
<rect x="495.9" y="972.5" width="2" height="3" fill="#45a214" opacity="0.5"/>
<rect x="507.0" y="972.5" width="2" height="3" fill="#45a214" opacity="0.5"/>
<rect x="518.0" y="972.5" width="2" height="3" fill="#45a214" opacity="0.5"/>
<rect x="529.0" y="972.5" width="2" height="3" fill="#45a214" opacity="0.5"/>
<rect x="540.0" y="972.5" width="2" height="3" fill="#45a214" opacity="0.5"/>
<rect x="551.1" y="972.5" width="2" height="3" fill="#45a214" opacity="0.5"/>
<rect x="562.1" y="972.5" width="2" height="3" fill="#45a214" opacity="0.5"/>
<rect x="573.1" y="972.5" width="2" height="3" fill="#45a214" opacity="0.5"/>
<rect x="584.2" y="972.5" width="2" height="3" fill="#45a214" opacity="0.5"/>
<rect x="595.2" y="972.5" width="2" height="3" fill="#45a214" opacity="0.5"/>
<rect x="606.2" y="972.5" width="2" height="3" fill="#45a214" opacity="0.5"/>
<rect x="616.2" y="966.9" width="4" height="9.1" fill="#45a214"/>
<rect x="627.2" y="965.1" width="4" height="10.9" fill="#45a214"/>
<rect x="638.3" y="960.6" width="4" height="15.4" fill="#45a214"/>
<rect x="649.3" y="957.2" width="4" height="18.8" fill="#45a214"/>
<rect x="660.3" y="958.0" width="4" height="18.0" fill="#45a214"/>
<rect x="671.4" y="953.6" width="4" height="22.4" fill="#45a214"/>
<rect x="682.4" y="953.6" width="4" height="22.4" fill="#45a214"/>
<rect x="693.4" y="952.5" width="4" height="23.5" fill="#45a214"/>
<rect x="704.4" y="946.2" width="4" height="29.8" fill="#45a214"/>
<rect x="715.5" y="938.3" width="4" height="37.7" fill="#45a214"/>
<rect x="726.5" y="932.0" width="4" height="44.0" fill="#45a214"/>
<rect x="737.5" y="939.1" width="4" height="36.9" fill="#45a214"/>
<rect x="748.5" y="924.9" width="4" height="51.1" fill="#45a214"/>
<rect x="759.6" y="927.3" width="4" height="48.7" fill="#45a214"/>
<rect x="770.6" y="896.6" width="4" height="79.4" fill="#45a214"/>
<rect x="781.6" y="886.8" width="4" height="89.2" fill="#45a214"/>
<rect x="792.6" y="890.3" width="4" height="85.7" fill="#45a214"/>
<rect x="803.6" y="861.6" width="4" height="114.4" fill="#45a214"/>
<rect x="814.7" y="854.5" width="4" height="121.5" fill="#45a214"/>
<rect x="825.7" y="854.5" width="4" height="121.5" fill="#45a214"/>
<rect x="836.7" y="851.7" width="4" height="124.3" fill="#45a214"/>
<rect x="847.8" y="859.1" width="4" height="116.9" fill="#45a214"/>
<rect x="858.8" y="855.2" width="4" height="120.8" fill="#45a214"/>
<rect x="869.8" y="827.3" width="4" height="148.7" fill="#45a214"/>
<rect x="880.8" y="832.2" width="4" height="143.8" fill="#45a214"/>
<rect x="891.9" y="836.2" width="4" height="139.8" fill="#45a214"/>
<rect x="902.9" y="851.7" width="4" height="124.3" fill="#45a214"/>
<rect x="913.9" y="864.3" width="4" height="111.7" fill="#45a214"/>
<rect x="924.9" y="873.2" width="4" height="102.8" fill="#45a214"/>
<rect x="936.0" y="893.4" width="4" height="82.6" fill="#45a214"/>
<rect x="947.0" y="902.3" width="4" height="73.7" fill="#45a214"/>
<rect x="958.0" y="911.2" width="4" height="64.8" fill="#45a214"/>
<rect x="969.0" y="913.9" width="4" height="62.1" fill="#45a214"/>
<rect x="980.1" y="924.9" width="4" height="51.1" fill="#45a214"/>
<rect x="991.1" y="932.8" width="4" height="43.2" fill="#45a214"/>
<rect x="1002.1" y="938.9" width="4" height="37.1" fill="#45a214"/>
<rect x="1013.1" y="941.7" width="4" height="34.3" fill="#45a214"/>
<rect x="1024.2" y="940.2" width="4" height="35.8" fill="#45a214"/>
<rect x="1035.2" y="941.2" width="4" height="34.8" fill="#45a214"/>
<rect x="1046.2" y="947.3" width="4" height="28.7" fill="#45a214"/>
<rect x="1057.2" y="950.1" width="4" height="25.9" fill="#45a214"/>
<rect x="1068.2" y="950.8" width="4" height="25.2" fill="#45a214"/>
<rect x="1079.3" y="950.8" width="4" height="25.2" fill="#45a214"/>
<rect x="1090.3" y="946.2" width="4" height="29.8" fill="#45a214"/>
<rect x="1101.3" y="942.6" width="4" height="33.4" fill="#45a214"/>
<rect x="1112.4" y="927.3" width="4" height="48.7" fill="#45a214"/>
<rect x="1123.4" y="906.9" width="4" height="69.1" fill="#45a214"/>
<rect x="1134.4" y="859.1" width="4" height="116.9" fill="#45a214"/>
<rect x="1145.4" y="824.1" width="4" height="151.9" fill="#45a214"/>
<rect x="1156.5" y="799.5" width="4" height="176.5" fill="#45a214"/>
<rect x="1167.5" y="788.0" width="4" height="188.0" fill="#45a214"/>
<rect x="1178.5" y="869.0" width="4" height="107.0" fill="#45a214"/>
<rect x="1189.5" y="910.1" width="4" height="65.9" fill="#45a214"/>
<rect x="1200.5" y="877.3" width="4" height="98.7" fill="#45a214"/>
<rect x="1211.6" y="868.1" width="4" height="107.9" fill="#45a214"/>
<rect x="1222.6" y="889.4" width="4" height="86.6" fill="#45a214"/>
<rect x="1233.6" y="912.3" width="4" height="63.7" fill="#45a214"/>
<rect x="1244.7" y="932.2" width="4" height="43.8" fill="#45a214"/>
<rect x="1255.7" y="940.3" width="4" height="35.7" fill="#45a214"/>
<rect x="1266.7" y="946.2" width="4" height="29.8" fill="#45a214"/>
<rect x="1277.7" y="949.2" width="4" height="26.8" fill="#45a214"/>
<rect x="1288.8" y="952.7" width="4" height="23.3" fill="#45a214"/>
<rect x="1299.8" y="952.7" width="4" height="23.3" fill="#45a214"/>
<rect x="1310.8" y="953.5" width="4" height="22.5" fill="#45a214"/>
<rect x="1321.8" y="953.5" width="4" height="22.5" fill="#45a214"/>
<rect x="1332.9" y="954.3" width="4" height="21.7" fill="#45a214"/>
<rect x="1343.9" y="955.1" width="4" height="20.9" fill="#45a214"/>
<rect x="1354.9" y="963.2" width="4" height="12.8" fill="#45a214"/>
<rect x="1365.9" y="964.2" width="4" height="11.8" fill="#45a214"/>
<rect x="1377.0" y="960.8" width="4" height="15.2" fill="#45a214"/>
<rect x="1388.0" y="961.6" width="4" height="14.4" fill="#45a214"/>
<rect x="1399.0" y="965.0" width="4" height="11.0" fill="#45a214"/>
<rect x="1410.0" y="966.1" width="4" height="9.9" fill="#45a214"/>
<rect x="1421.0" y="968.8" width="4" height="7.2" fill="#45a214"/>
<rect x="1432.1" y="968.0" width="4" height="8.0" fill="#45a214"/>
<rect x="1443.1" y="968.8" width="4" height="7.2" fill="#45a214"/>
<rect x="1454.1" y="968.8" width="4" height="7.2" fill="#45a214"/>
<rect x="1465.2" y="967.2" width="4" height="8.8" fill="#45a214"/>
<rect x="1476.2" y="967.7" width="4" height="8.3" fill="#45a214"/>
<rect x="1487.2" y="967.5" width="4" height="8.5" fill="#45a214"/>
<rect x="1498.2" y="966.6" width="4" height="9.4" fill="#45a214"/>
<rect x="1509.2" y="966.6" width="4" height="9.4" fill="#45a214"/>
<rect x="1520.3" y="967.5" width="4" height="8.5" fill="#45a214"/>
<rect x="1531.3" y="968.5" width="4" height="7.5" fill="#45a214"/>
<rect x="1542.3" y="969.2" width="4" height="6.8" fill="#45a214"/>
<rect x="1553.4" y="969.2" width="4" height="6.8" fill="#45a214"/>
<rect x="1564.4" y="969.2" width="4" height="6.8" fill="#45a214"/>
<rect x="1575.4" y="969.2" width="4" height="6.8" fill="#45a214"/>
<rect x="1586.4" y="969.8" width="4" height="6.2" fill="#45a214"/>
<rect x="1597.5" y="967.5" width="4" height="8.5" fill="#45a214"/>
<rect x="1608.5" y="966.6" width="4" height="9.4" fill="#45a214"/>
<rect x="1619.5" y="962.8" width="4" height="13.2" fill="#45a214"/>
<rect x="1630.5" y="961.7" width="4" height="14.3" fill="#45a214"/>
<rect x="1641.5" y="958.5" width="4" height="17.5" fill="#45a214"/>
<rect x="1652.6" y="956.8" width="4" height="19.2" fill="#45a214"/>
<rect x="1663.6" y="957.8" width="4" height="18.2" fill="#45a214"/>
<rect x="1674.6" y="961.0" width="4" height="15.0" fill="#45a214"/>
<rect x="1685.7" y="958.5" width="4" height="17.5" fill="#45a214"/>
<rect x="1696.7" y="960.6" width="4" height="15.4" fill="#45a214"/>
<rect x="1707.7" y="962.1" width="4" height="13.9" fill="#45a214"/>
<rect x="1718.7" y="964.9" width="4" height="11.1" fill="#45a214"/>
<rect x="1729.8" y="966.0" width="4" height="10.0" fill="#45a214"/>
<rect x="1740.8" y="966.6" width="4" height="9.4" fill="#45a214"/>
<rect x="1751.8" y="969.6" width="4" height="6.4" fill="#45a214"/>
<rect x="1762.8" y="970.7" width="4" height="5.3" fill="#45a214"/>
<rect x="1773.9" y="970.2" width="4" height="5.8" fill="#45a214"/>
<rect x="1784.9" y="970.2" width="4" height="5.8" fill="#45a214"/>
<rect x="1795.9" y="970.7" width="4" height="5.3" fill="#45a214"/>
<rect x="1806.9" y="971.3" width="4" height="4.7" fill="#45a214"/>
<rect x="1818.0" y="971.3" width="4" height="4.7" fill="#45a214"/>
<rect x="1829.0" y="971.3" width="4" height="4.7" fill="#45a214"/>
<rect x="1840.0" y="971.3" width="4" height="4.7" fill="#45a214"/>
<rect x="1851.0" y="971.3" width="4" height="4.7" fill="#45a214"/>
<rect x="1862.0" y="971.7" width="4" height="4.3" fill="#45a214"/>
<line x1="71.5" y1="974.5" x2="1866" y2="974.5" stroke="#b0b0b0" stroke-opacity="0.55" stroke-width="1" shape-rendering="crispEdges"/>
<text transform="translate(32.5,857.5) rotate(-90)" x="0" y="0" class="tl" text-anchor="middle" dominant-baseline="central" textLength="139.5" lengthAdjust="spacingAndGlyphs">Weekly Doses Administered</text>
<!-- collapse icon & tooltip -->
<circle cx="1894" cy="146.8" r="7.6" fill="none" stroke="#8a8a8a" stroke-width="1"/>
<g stroke="#a8a8a8" stroke-width="1" fill="none" stroke-linecap="round">
<path d="M1890.6 143.4 L1893 145.8 M1893 144 L1893 145.8 L1891.2 145.8"/>
<path d="M1897.4 143.4 L1895 145.8 M1895 144 L1895 145.8 L1896.8 145.8"/>
<path d="M1890.6 150.2 L1893 147.8 M1893 149.6 L1893 147.8 L1891.2 147.8"/>
<path d="M1897.4 150.2 L1895 147.8 M1895 149.6 L1895 147.8 L1896.8 147.8"/>
</g>
<rect x="1860.5" y="165" width="58.5" height="23" fill="#fff" stroke="#3a3a3a" stroke-width="1"/>
<text x="1867.2" y="180.8" font-size="12.5" fill="#3a3a3a" textLength="44" lengthAdjust="spacingAndGlyphs">Collapse</text>
<!-- tabs -->
<rect x="22.5" y="1002" width="71" height="30" fill="#2b2b2b"/>
<rect x="22.5" y="1030.5" width="71" height="2" fill="#2789c9"/>
<rect x="101.5" y="1002.5" width="71.5" height="29.5" fill="#353535" stroke="#454545" stroke-width="1"/>
<text x="37" y="1022.5" font-size="13" fill="#f0f0f0" textLength="42.2" lengthAdjust="spacingAndGlyphs">Weekly</text>
<text x="116.9" y="1022.5" font-size="13" fill="#f0f0f0" textLength="40.1" lengthAdjust="spacingAndGlyphs">28-Day</text>
<rect x="157.5" y="1010" width="1" height="15" fill="#fff"/>
<!-- scrollbar arrows -->
<path d="M1907.5 10.5 L1915 10.5 L1911.2 6.5 Z" fill="#505050"/>
<path d="M1908.5 1069 L1915 1069 L1911.7 1073 Z" fill="#505050"/>
</svg>
</body></html>
